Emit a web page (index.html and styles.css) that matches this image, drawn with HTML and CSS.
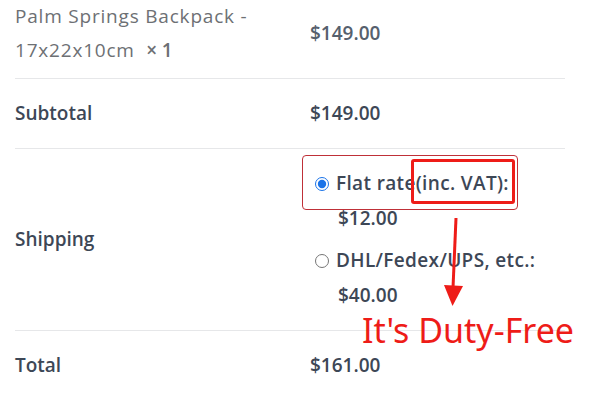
FILE: index.html
```html
<!DOCTYPE html>
<html>
  <head>
    <meta charset="utf-8" />
    <title>Order review</title>
    <meta name="viewport" content="width=device-width, initial-scale=1.0" />
    <link rel="stylesheet" href="styles.css">
  </head>
  <body>
    <div class="review">
      <table class="totals">
        <tr class="item">
          <td class="name">Palm Springs Backpack -<br />17x22x10cm&nbsp; <strong class="qty">&times;&thinsp;1</strong></td>
          <td class="price">$149.00</td>
        </tr>
        <tr>
          <th>Subtotal</th>
          <td class="amount">$149.00</td>
        </tr>
        <tr>
          <th>Shipping</th>
          <td>
            <ul class="methods">
              <li>
                <label><input type="radio" name="ship" checked />Flat rate(inc. VAT):</label>
                <span class="cost">$12.00</span>
              </li>
              <li>
                <label><input type="radio" name="ship" />DHL/Fedex/UPS, etc.:</label>
                <span class="cost">$40.00</span>
              </li>
            </ul>
          </td>
        </tr>
        <tr>
          <th>Total</th>
          <td class="amount">$161.00</td>
        </tr>
      </table>

      <!-- annotation drawn over the screenshot -->
      <div class="mark mark-outer"></div>
      <div class="mark mark-inner"></div>
      <svg class="arrow" width="30" height="100" viewBox="0 0 30 100">
        <line x1="17" y1="4" x2="14" y2="74" stroke="#ee1c18" stroke-width="3" />
        <polygon points="5,71 24,72 13.5,92" fill="#ee1c18" />
      </svg>
      <p class="note">It's Duty-Free</p>
    </div>
  </body>
</html>
```

FILE: styles.css
```css
body {
  margin: 0;
  background: #fff;
  font-family: "Open Sans", "DejaVu Sans", sans-serif;
  color: #3d4756;
}

.review {
  position: relative;
  margin-top: -24px;
}

.totals {
  margin-left: 15px;
  width: 550px;
  border-collapse: collapse;
  font-size: 19px;
  line-height: 35px;
}

.totals th,
.totals td {
  padding: 17px 0;
  text-align: left;
  vertical-align: middle;
  border-bottom: 1px solid #e6e7e9;
}

.totals tr:last-child th,
.totals tr:last-child td {
  border-bottom: none;
}

.totals th {
  width: 295px;
  font-weight: 600;
}

.totals .item td {
  padding: 23px 0 11px;
}

.item .name {
  width: 295px;
  color: #6d7074;
  line-height: 34px;
  letter-spacing: 0.8px;
}

.qty {
  font-weight: 600;
}

.price,
.amount {
  font-weight: 600;
  color: #56606d;
}

.amount {
  color: #3d4756;
}

.methods {
  list-style: none;
  margin: 0;
  padding: 0 0 0 5px;
  font-weight: 600;
  letter-spacing: 0.35px;
}

.methods li + li {
  margin-top: 7px;
}

.methods label {
  display: block;
}

.methods input {
  width: 14px;
  height: 14px;
  margin: 0 7px 0 0;
  vertical-align: -1px;
  accent-color: #1a73e8;
}

.cost {
  display: block;
  padding-left: 23px;
  letter-spacing: 0;
}

.mark {
  position: absolute;
  box-sizing: border-box;
}

.mark-outer {
  left: 302px;
  top: 179px;
  width: 216px;
  height: 55px;
  border: 1px solid #bf3038;
  border-radius: 4px;
}

.mark-inner {
  left: 411px;
  top: 183px;
  width: 104px;
  height: 45px;
  border: 3px solid #ee1c18;
  border-radius: 3px;
}

.arrow {
  position: absolute;
  left: 439px;
  top: 238px;
}

.note {
  position: absolute;
  left: 362px;
  top: 334px;
  margin: 0;
  font-family: "Noto Sans", sans-serif;
  font-size: 34px;
  line-height: 40px;
  color: #ee1c18;
}
```
